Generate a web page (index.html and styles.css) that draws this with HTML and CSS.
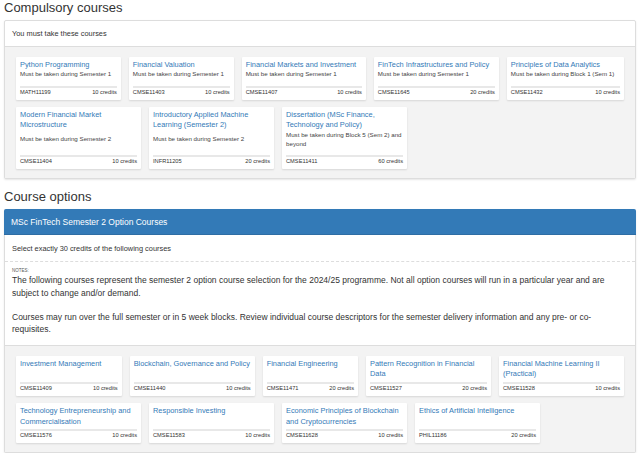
FILE: index.html
```html
<!DOCTYPE html>
<html lang="en">
<head>
    <meta charset="UTF-8">
    <meta name="viewport" content="width=device-width, initial-scale=1.0">
    <title>Programme Courses</title>
    <link rel="stylesheet" href="styles.css">
</head>
<body>
    <h3 class="section-title">Compulsory courses</h3>
    <div class="panel">
        <div class="panel-heading">You must take these courses</div>
        <div class="course-list">
            <div class="course">
                <a class="course-title" href="#">Python Programming</a>
                <div class="course-desc">Must be taken during Semester 1</div>
                <div class="course-foot"><span>MATH11199</span><span>10 credits</span></div>
            </div>
            <div class="course">
                <a class="course-title" href="#">Financial Valuation</a>
                <div class="course-desc">Must be taken during Semester 1</div>
                <div class="course-foot"><span>CMSE11403</span><span>10 credits</span></div>
            </div>
            <div class="course">
                <a class="course-title" href="#">Financial Markets and Investment</a>
                <div class="course-desc">Must be taken during Semester 1</div>
                <div class="course-foot"><span>CMSE11407</span><span>10 credits</span></div>
            </div>
            <div class="course">
                <a class="course-title" href="#">FinTech Infrastructures and Policy</a>
                <div class="course-desc">Must be taken during Semester 1</div>
                <div class="course-foot"><span>CMSE11645</span><span>20 credits</span></div>
            </div>
            <div class="course">
                <a class="course-title" href="#">Principles of Data Analytics</a>
                <div class="course-desc">Must be taken during Block 1 (Sem 1)</div>
                <div class="course-foot"><span>CMSE11432</span><span>10 credits</span></div>
            </div>
            <div class="course">
                <a class="course-title" href="#">Modern Financial Market Microstructure</a>
                <div class="course-desc">Must be taken during Semester 2</div>
                <div class="course-foot"><span>CMSE11404</span><span>10 credits</span></div>
            </div>
            <div class="course">
                <a class="course-title" href="#">Introductory Applied Machine Learning (Semester 2)</a>
                <div class="course-desc">Must be taken during Semester 2</div>
                <div class="course-foot"><span>INFR11205</span><span>20 credits</span></div>
            </div>
            <div class="course">
                <a class="course-title" href="#">Dissertation (MSc Finance, Technology and Policy)</a>
                <div class="course-desc">Must be taken during Block 5 (Sem 2) and beyond</div>
                <div class="course-foot"><span>CMSE11411</span><span>60 credits</span></div>
            </div>
        </div>
    </div>

    <h3 class="section-title">Course options</h3>
    <div class="panel options">
        <div class="panel-heading primary">MSc FinTech Semester 2 Option Courses</div>
        <div class="panel-sub">Select exactly 30 credits of the following courses</div>
        <div class="notes">
            <div class="notes-label">Notes:</div>
            <p>The following courses represent the semester 2 option course selection for the 2024/25 programme. Not all option courses will run in a particular year and are subject to change and/or demand.</p>
            <p>Courses may run over the full semester or in 5 week blocks. Review individual course descriptors for the semester delivery information and any pre- or co-requisites.</p>
        </div>
        <div class="course-list">
            <div class="course">
                <a class="course-title" href="#">Investment Management</a>
                <div class="course-foot"><span>CMSE11409</span><span>10 credits</span></div>
            </div>
            <div class="course">
                <a class="course-title" href="#">Blockchain, Governance and Policy</a>
                <div class="course-foot"><span>CMSE11440</span><span>10 credits</span></div>
            </div>
            <div class="course">
                <a class="course-title" href="#">Financial Engineering</a>
                <div class="course-foot"><span>CMSE11471</span><span>20 credits</span></div>
            </div>
            <div class="course">
                <a class="course-title" href="#">Pattern Recognition in Financial Data</a>
                <div class="course-foot"><span>CMSE11527</span><span>20 credits</span></div>
            </div>
            <div class="course">
                <a class="course-title" href="#">Financial Machine Learning II (Practical)</a>
                <div class="course-foot"><span>CMSE11528</span><span>10 credits</span></div>
            </div>
            <div class="course">
                <a class="course-title" href="#">Technology Entrepreneurship and Commercialisation</a>
                <div class="course-foot"><span>CMSE11576</span><span>10 credits</span></div>
            </div>
            <div class="course">
                <a class="course-title" href="#">Responsible Investing</a>
                <div class="course-foot"><span>CMSE11583</span><span>10 credits</span></div>
            </div>
            <div class="course">
                <a class="course-title" href="#">Economic Principles of Blockchain and Cryptocurrencies</a>
                <div class="course-foot"><span>CMSE11628</span><span>10 credits</span></div>
            </div>
            <div class="course">
                <a class="course-title" href="#">Ethics of Artificial Intelligence</a>
                <div class="course-foot"><span>PHIL11186</span><span>20 credits</span></div>
            </div>
        </div>
    </div>
</body>
</html>
```

FILE: styles.css
```css
body {
    font-family: "Liberation Sans", Arial, sans-serif;
    color: #333;
    background: #fff;
    margin: 0;
    padding: 0 4px;
}
.section-title {
    font-size: 13px;
    font-weight: normal;
    line-height: 16px;
    margin: 0 0 4px;
}
.panel + .section-title {
    margin-top: 10px;
}
.panel {
    border: 1px solid #ddd;
    border-radius: 2px;
    background: #fff;
    box-shadow: 0 1px 2px rgba(0,0,0,0.1);
}
.panel-heading {
    font-size: 7.4px;
    line-height: 9px;
    padding: 8px 7px 7.5px;
    border-bottom: 1px solid #ddd;
}
.panel-heading.primary {
    background: #337ab7;
    color: #fff;
    font-size: 8.5px;
    line-height: 10px;
    padding: 7.5px 7px 7.5px;
    border-bottom: 1px solid #2e6da4;
    margin: -1px -1px 0;
    border-radius: 2px 2px 0 0;
}
.panel-sub {
    font-size: 7.4px;
    line-height: 9px;
    padding: 8.5px 7px;
    border-bottom: 1px dashed #ddd;
}
.notes {
    padding: 6px 7px 9px;
    border-bottom: 1px solid #ddd;
}
.notes-label {
    font-size: 4.5px;
    line-height: 5px;
    text-transform: uppercase;
    color: #555;
    margin-bottom: 1px;
}
.notes p {
    font-size: 8.5px;
    line-height: 12.3px;
    margin: 0;
}
.notes p + p {
    margin-top: 12.3px;
}
.course-list {
    background: #f3f3f3;
    padding: 10px 11px 9px;
    display: flex;
    flex-wrap: wrap;
    column-gap: 8px;
    row-gap: 7px;
}
.course {
    flex: 1 1 auto;
    max-width: 125px;
    background: #fff;
    border-radius: 1px;
    box-shadow: 0 1px 2px rgba(0,0,0,0.12);
    padding: 3px 4px 4px;
    display: flex;
    flex-direction: column;
    box-sizing: border-box;
}
.course-title {
    color: #337ab7;
    text-decoration: none;
    font-size: 7.4px;
    line-height: 10.65px;
}
.options .course-title {
    flex: 1;
}
.course-desc {
    flex: 1;
    display: flex;
    align-items: center;
    font-size: 6.2px;
    line-height: 8.6px;
    color: #444;
    padding-bottom: 5px;
}
.course-foot {
    display: flex;
    justify-content: space-between;
    gap: 6px;
    margin-top: 2px;
    border-top: 2px solid #e8e8e8;
    padding-top: 1px;
    font-size: 5.7px;
    line-height: 7px;
    color: #333;
}
```
